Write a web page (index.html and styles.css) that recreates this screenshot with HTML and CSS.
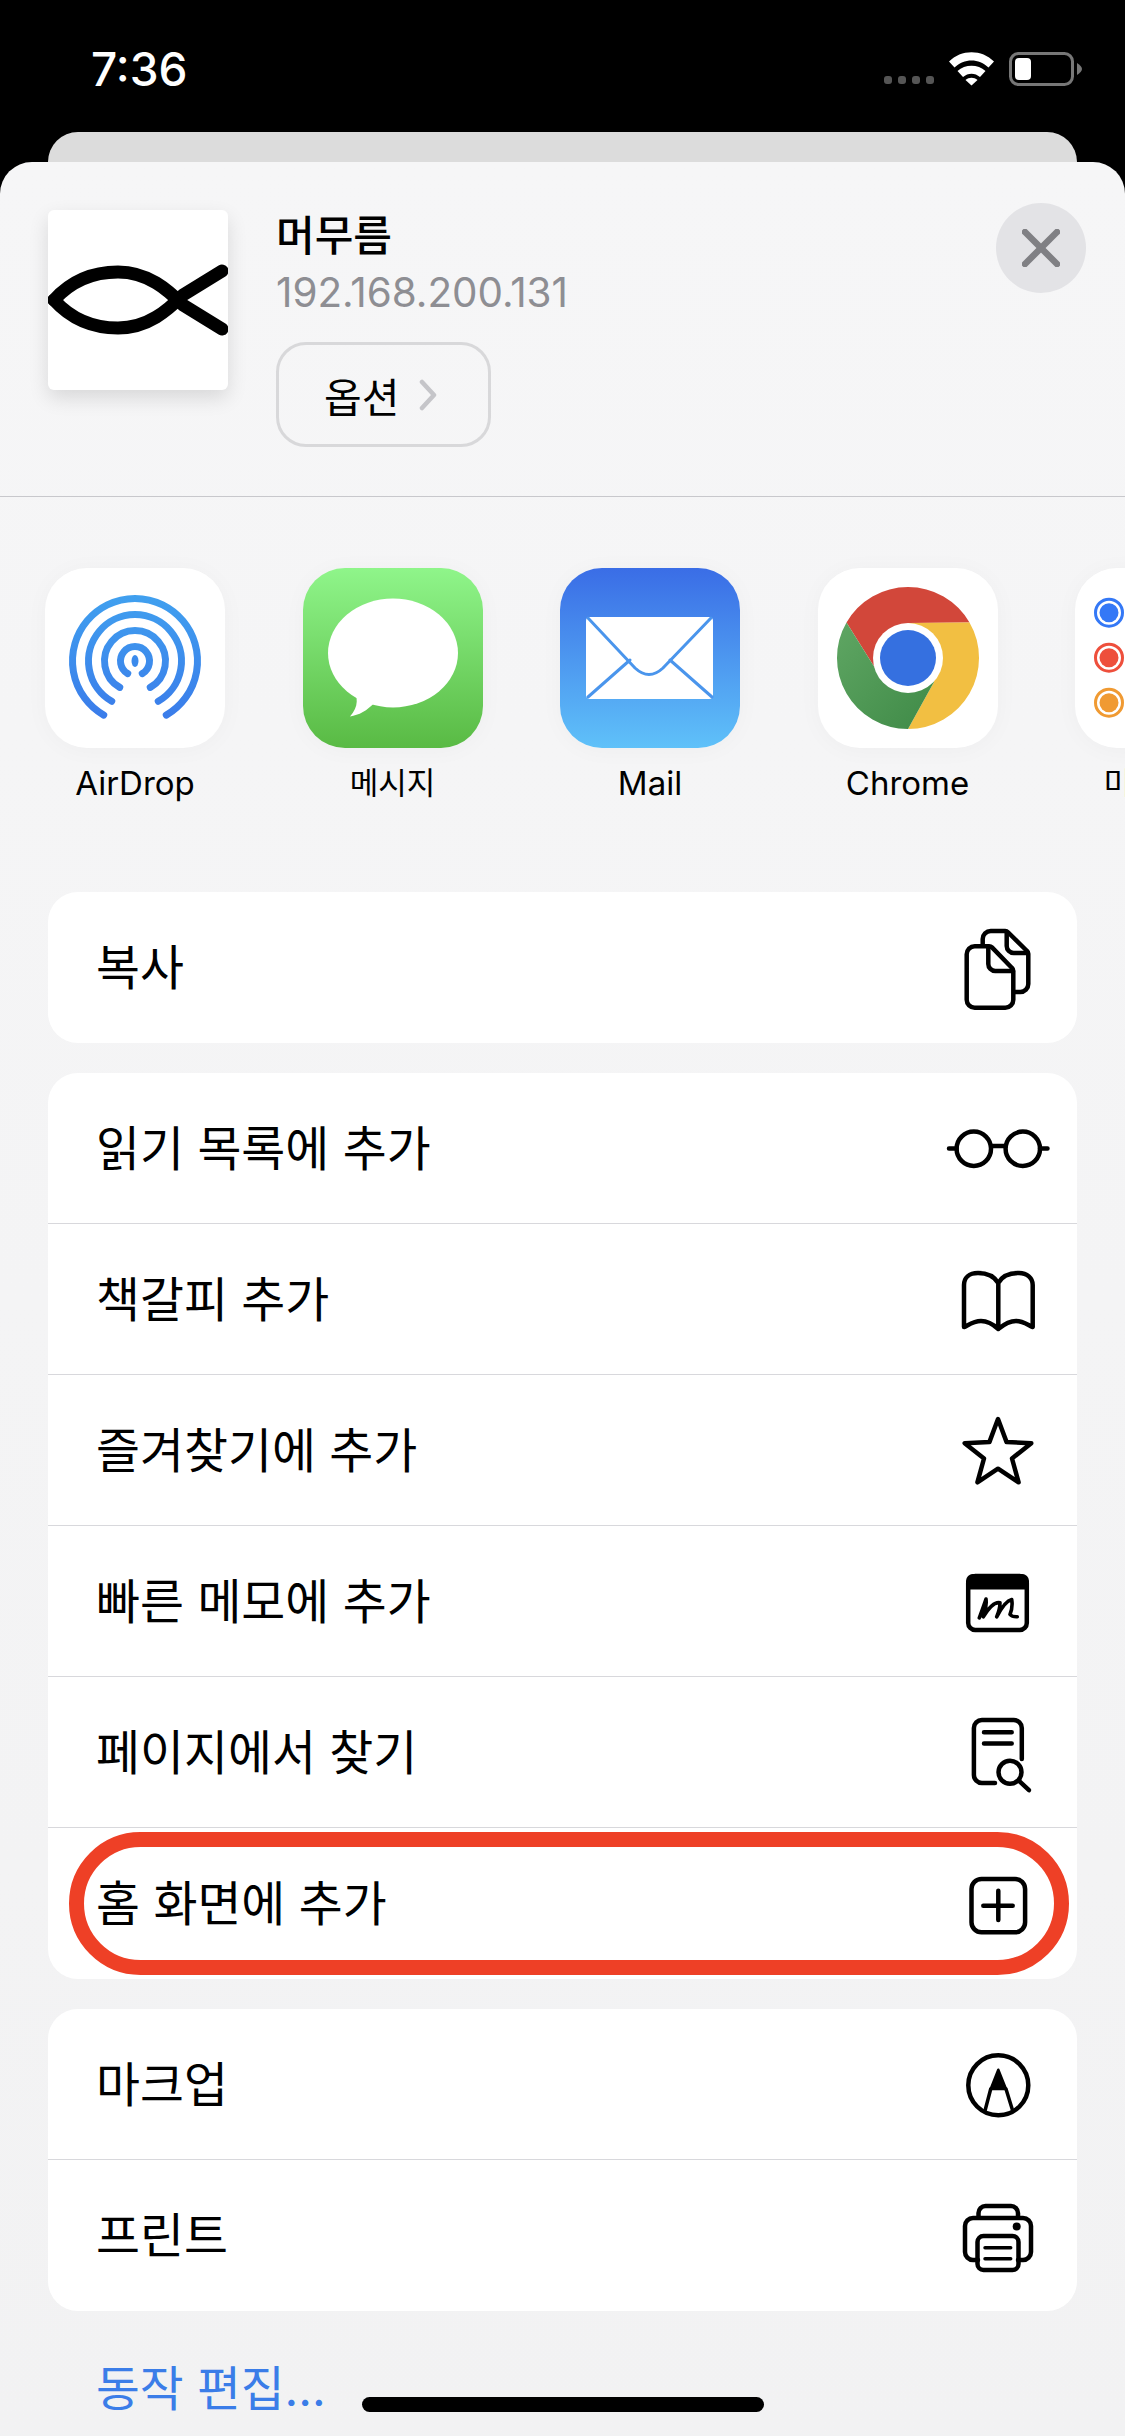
FILE: index.html
```html
<!DOCTYPE html>
<html lang="ko">
<head>
  <meta charset="UTF-8" />
  <title>공유</title>
  <link rel="stylesheet" href="styles.css">
</head>
<body>

<div class="statusBar">
  <span class="time">7:36</span>
  <div class="statusIcons">
    <div class="signal"><i></i><i></i><i></i><i></i></div>
    <svg width="45" height="34" viewBox="0 0 45 34" fill="#fff">
      <path d="M0 9.5C12-3 33-3 45 9.5L39.5 15.5C30 6 15 6 5.5 15.5Z"/>
      <path d="M8.5 19C16 12 29 12 36.5 19L31 25C26 20.5 19 20.5 14 25Z"/>
      <path d="M16.5 28C20 25 25 25 28.5 28L22.5 33.5Z"/>
    </svg>
    <svg width="73" height="34" viewBox="0 0 73 34">
      <rect x="1.5" y="1.5" width="62" height="31" rx="8" fill="none" stroke="#777" stroke-width="3"/>
      <rect x="6" y="6" width="16" height="22" rx="4" fill="#fff"/>
      <path d="M68 11C71 13 73 15 73 17C73 19 71 21 68 23Z" fill="#777"/>
    </svg>
  </div>
</div>

<div class="backCard"></div>

<div class="sheet">
  <header class="sheetHeader">
    <div class="thumb">
      <svg width="180" height="180" viewBox="0 0 180 180" fill="none" stroke="#000" stroke-width="13" stroke-linecap="round" stroke-linejoin="round">
        <path d="M6 90C24 70 45 62 70 62C100 62 120 80 135 95L174 119"/>
        <path d="M6 90C24 110 45 118 70 118C100 118 120 100 135 85L174 61"/>
      </svg>
    </div>
    <div class="pageInfo">
      <div class="pageTitle">머무름</div>
      <div class="pageUrl">192.168.200.131</div>
      <div class="optionBtn">
        <span>옵션</span>
        <svg width="18" height="32" viewBox="0 0 18 32" fill="none" stroke="#c5c5c9" stroke-width="4.5" stroke-linecap="round" stroke-linejoin="round"><path d="M3 3L15 16L3 29"/></svg>
      </div>
    </div>
    <div class="closeBtn">
      <svg width="38" height="38" viewBox="0 0 38 38" stroke="#808084" stroke-width="6.5" stroke-linecap="round"><path d="M3 3L35 35M35 3L3 35"/></svg>
    </div>
  </header>

  <div class="apps">
    <div class="app">
      <div class="appIcon">
        <svg width="180" height="180" viewBox="0 0 180 180" fill="none" stroke="url(#dropBlue)" stroke-width="7" stroke-linecap="round">
          <defs><linearGradient id="dropBlue" gradientUnits="userSpaceOnUse" x1="0" y1="27" x2="0" y2="150"><stop offset="0" stop-color="#40a0ef"/><stop offset="1" stop-color="#3a7cea"/></linearGradient></defs>
          <path d="M58.75 147.1A62.5 62.5 0 1 1 121.25 147.1"/>
          <path d="M66.75 133.3A46.5 46.5 0 1 1 113.25 133.3"/>
          <path d="M74.75 119.4A30.5 30.5 0 1 1 105.25 119.4"/>
          <path d="M82.75 105.6A14.5 14.5 0 1 1 97.25 105.6"/>
          <ellipse cx="90" cy="93" rx="3.5" ry="6" fill="#3a8aec" stroke="none"/>
        </svg>
      </div>
      <div class="appName latin">AirDrop</div>
    </div>
    <div class="app">
      <div class="appIcon messages">
        <svg width="180" height="180" viewBox="0 0 180 180" fill="#fff">
          <ellipse cx="90" cy="85" rx="65" ry="54.5"/>
          <path d="M50 118C55 130 56 138 47 148.5C56 147 64 143 72 134Z"/>
        </svg>
      </div>
      <div class="appName">메시지</div>
    </div>
    <div class="app">
      <div class="appIcon mail">
        <svg width="180" height="180" viewBox="0 0 180 180" fill="none" stroke="#4a95ec" stroke-width="3" stroke-linecap="round">
          <rect x="26" y="49" width="127" height="82" rx="4" fill="#fff" stroke="none"/>
          <path d="M28 50L75 100Q89 113 103 100L151 50"/>
          <path d="M28 129L70 92M110 92L152 129"/>
        </svg>
      </div>
      <div class="appName latin">Mail</div>
    </div>
    <div class="app">
      <div class="appIcon">
        <svg width="180" height="180" viewBox="0 0 180 180">
          <defs><linearGradient id="chromeGreen" x1="0" y1="0" x2="1" y2="1"><stop offset="0" stop-color="#5fa663"/><stop offset="1" stop-color="#3f8a47"/></linearGradient></defs>
          <path d="M90 55L151.5 54.5A71 71 0 0 0 28.5 54.5L57 100L90 90Z" fill="#d2473a"/>
          <path d="M90 55L151.5 54.5A71 71 0 0 1 90 161L116 114L90 90Z" fill="#f2bf42"/>
          <path d="M28.5 54.5A71 71 0 0 0 90 161L116 114L90 90L57 100Z" fill="url(#chromeGreen)"/>
          <circle cx="90" cy="90" r="35" fill="#fff"/>
          <circle cx="90" cy="90" r="28" fill="#3570e0"/>
        </svg>
      </div>
      <div class="appName latin">Chrome</div>
    </div>
    <div class="app">
      <div class="appIcon">
        <svg width="180" height="180" viewBox="0 0 180 180" stroke-width="3">
          <circle cx="34" cy="44.7" r="13.5" fill="#fff" stroke="#3478f6"/><circle cx="34" cy="44.7" r="9.5" fill="#3478f6"/>
          <circle cx="34" cy="89.7" r="13.5" fill="#fff" stroke="#ee4f3c"/><circle cx="34" cy="89.7" r="9.5" fill="#ee4f3c"/>
          <circle cx="34" cy="134.7" r="13.5" fill="#fff" stroke="#f09a32"/><circle cx="34" cy="134.7" r="9.5" fill="#f09a32"/>
        </svg>
      </div>
      <div class="appName">미리 알림</div>
    </div>
  </div>

  <div class="group">
    <div class="row">
      <span>복사</span>
      <svg class="rowIcon" viewBox="0 0 110 100">
        <path d="M39.7 27V21a8 8 0 0 1 8-8H62a4 4 0 0 1 3 1.2L84 33a4 4 0 0 1 1.3 3V66a8 8 0 0 1-8 8H71"/>
        <path d="M63.7 14V28a7 7 0 0 0 7 7H85"/>
        <path d="M31.7 28.2H46a4 4 0 0 1 3 1.2L69 50a4 4 0 0 1 1.3 3V81.8a8 8 0 0 1-8 8H31.7a8 8 0 0 1-8-8V36.2a8 8 0 0 1 8-8Z" fill="#fff"/>
        <path d="M45.3 29V46a7 7 0 0 0 7 7H70"/>
      </svg>
    </div>
  </div>

  <div class="group">
    <div class="row">
      <span>읽기 목록에 추가</span>
      <svg class="rowIcon" viewBox="0 0 110 100">
        <circle cx="30.8" cy="50.8" r="17.2"/>
        <circle cx="79.8" cy="50.8" r="17.2"/>
        <path d="M48 48H62.6M6 50.5H13.6M97 50.5H104.5"/>
      </svg>
    </div>
    <div class="row">
      <span>책갈피 추가</span>
      <svg class="rowIcon" viewBox="0 0 110 100">
        <path d="M55.3 34C51 27 43 24 35 24C26 24 21 29 21 36V78C24 77 30 72 38 72C46 72 52 77 55.3 80C59 77 65 72 73 72C81 72 86 77 89.7 78V36C89.7 29 84 24 76 24C67 24 59 27 55.3 34V80"/>
      </svg>
    </div>
    <div class="row">
      <span>즐겨찾기에 추가</span>
      <svg class="rowIcon" viewBox="0 0 110 100">
        <path d="M55 19L63.6 42.1L88.3 43.2L69 58.5L75.6 82.3L55 68.7L34.4 82.3L41 58.5L21.7 43.2L46.4 42.1Z"/>
      </svg>
    </div>
    <div class="row">
      <span>빠른 메모에 추가</span>
      <svg class="rowIcon" viewBox="0 0 110 100">
        <rect x="25.2" y="25" width="58.6" height="54" rx="7"/>
        <path d="M23 38.5V30a7 7 0 0 1 7-7H79a7 7 0 0 1 7 7V38.5Z" fill="#000" stroke="none"/>
        <path d="M36.3 66.8Q41 54 43 48Q44 56 40.3 65.8Q50 50 57 51.8Q57 58 53.7 65.8Q62 50 68.7 48.5Q70 56 67 63.5Q69 66 74.3 65.8" stroke-width="3.6"/>
      </svg>
    </div>
    <div class="row">
      <span>페이지에서 찾기</span>
      <svg class="rowIcon" viewBox="0 0 110 100">
        <path d="M78.8 57V26a8 8 0 0 0-8-8H38.9a8 8 0 0 0-8 8V73a8 8 0 0 0 8 8H52"/>
        <path d="M41 30.2H68.7M41 41.5H68.7"/>
        <circle cx="67" cy="70.2" r="11.5"/>
        <path d="M76.3 79.2L86 88.2"/>
      </svg>
    </div>
    <div class="row">
      <span>홈 화면에 추가</span>
      <svg class="rowIcon" viewBox="0 0 110 100">
        <rect x="28.5" y="25" width="53.6" height="53.3" rx="10"/>
        <path d="M40.3 51.7H69.7M55.3 36.7V66"/>
      </svg>
      <div class="redMark"></div>
    </div>
  </div>

  <div class="group">
    <div class="row">
      <span>마크업</span>
      <svg class="rowIcon" viewBox="0 0 110 100">
        <circle cx="55.3" cy="51.3" r="30"/>
        <path d="M55.3 35.7L63 55H47.7Z" fill="#000" stroke-width="2.5"/>
        <path d="M47.7 55L42 76.7M63 55L69.7 76.7" stroke-width="3.5"/>
      </svg>
    </div>
    <div class="row">
      <span>프린트</span>
      <svg class="rowIcon" viewBox="0 0 110 100">
        <path d="M35.5 30V27a7 7 0 0 1 7-7H68a7 7 0 0 1 7 7V30"/>
        <path d="M35 74H30a8 8 0 0 1-8-8V40a8 8 0 0 1 8-8H80a8 8 0 0 1 8 8V66a8 8 0 0 1-8 8H75"/>
        <rect x="34.5" y="50" width="41" height="34" rx="6"/>
        <path d="M42 61.8H67.7M42 72.8H67.7" stroke-width="3.5"/>
        <circle cx="73.7" cy="40.5" r="4" fill="#000" stroke="none"/>
      </svg>
    </div>
  </div>

  <div class="editActions">동작 편집...</div>
</div>

<div class="homeBar"></div>

</body>
</html>
```

FILE: styles.css
```css
body {
  margin: 0;
  width: 1125px;
  height: 2436px;
  overflow: hidden;
  position: relative;
  background-color: #000;
  font-family: Inter, "Noto Sans CJK KR", sans-serif;
  color: #000;
}

/* status bar */
.statusBar {
  height: 132px;
  box-sizing: border-box;
  padding: 6px 43px 0 91px;
  display: flex;
  align-items: center;
  justify-content: space-between;
  color: #fff;
}
.time {
  font-size: 46px;
  font-weight: 500;
}
.statusIcons {
  display: flex;
  align-items: flex-end;
}
.statusIcons svg {
  display: block;
  margin-left: 15px;
}
.signal {
  display: flex;
  gap: 6px;
  margin-bottom: 2px;
}
.signal i {
  width: 8px;
  height: 8px;
  border-radius: 3px;
  background-color: #555;
}

/* sheet */
.backCard {
  height: 30px;
  margin: 0 48px;
  background-color: #dcdcdc;
  border-radius: 30px 30px 0 0;
}
.sheet {
  height: 2274px;
  background: linear-gradient(#f6f6f7, #f2f2f3);
  border-radius: 32px 32px 0 0;
}
.sheetHeader {
  height: 335px;
  box-sizing: border-box;
  padding: 48px 39px 0 48px;
  display: flex;
  align-items: flex-start;
  border-bottom: 1.5px solid #c8c8cc;
}
.thumb {
  width: 180px;
  height: 180px;
  flex: none;
  background-color: #fff;
  border-radius: 6px;
  box-shadow: 0 8px 20px rgba(0, 0, 0, 0.12);
}
.thumb svg {
  display: block;
}
.pageInfo {
  flex: 1;
  margin-left: 48px;
}
.pageTitle {
  font-size: 42px;
  font-weight: 500;
  line-height: 46px;
  padding-top: 3px;
}
.pageUrl {
  margin-top: 11px;
  font-size: 40.4px;
  line-height: 46px;
  color: #8e8e93;
}
.optionBtn {
  width: 215px;
  height: 105px;
  margin-top: 26px;
  box-sizing: border-box;
  display: flex;
  align-items: center;
  padding-left: 45px;
  gap: 20px;
  border: 3px solid #d8d8da;
  border-radius: 30px;
  font-size: 41px;
}
.closeBtn {
  width: 90px;
  height: 90px;
  margin-top: -7px;
  flex: none;
  display: flex;
  align-items: center;
  justify-content: center;
  border-radius: 50%;
  background-color: #e3e3e6;
}

/* app row */
.apps {
  display: flex;
  gap: 77.5px;
  padding: 71px 0 0 45px;
  height: 395px;
  box-sizing: border-box;
  overflow: hidden;
}
.app {
  width: 180px;
  flex: none;
}
.appIcon {
  width: 180px;
  height: 180px;
  background-color: #fff;
  border-radius: 42px;
  box-shadow: 0 2px 24px rgba(0, 0, 0, 0.03);
}
.appIcon svg {
  display: block;
}
.messages {
  background: linear-gradient(#8ff58a, #59ba44);
}
.mail {
  background: linear-gradient(#3a6de6, #5fc1f9);
}
.appName {
  margin-top: 15px;
  font-size: 31px;
  line-height: 40px;
  text-align: center;
  white-space: nowrap;
}
.latin {
  font-size: 33px;
}

/* action groups */
.group {
  margin: 0 48px 30px;
  background-color: #fff;
  border-radius: 30px;
}
.row {
  height: 151px;
  box-sizing: border-box;
  padding: 0 24px 0 48px;
  display: flex;
  align-items: center;
  justify-content: space-between;
  position: relative;
  font-size: 47.8px;
  border-bottom: 1.5px solid #d8d8dc;
}
.row:last-child {
  border-bottom: none;
}
.row span {
  padding-bottom: 6px;
}
.rowIcon {
  width: 110px;
  height: 100px;
  flex: none;
  fill: none;
  stroke: #000;
  stroke-width: 4.5;
  stroke-linecap: round;
  stroke-linejoin: round;
}
.redMark {
  position: absolute;
  left: 21px;
  right: 8px;
  top: 4px;
  bottom: 4px;
  border: 15px solid #ee4026;
  border-radius: 72px;
}
.editActions {
  padding-left: 96px;
  margin-top: 45px;
  font-size: 47.6px;
  line-height: 66px;
  color: #3b7de8;
}
.homeBar {
  position: absolute;
  left: 362px;
  top: 2397px;
  width: 402px;
  height: 15px;
  border-radius: 8px;
  background-color: #000;
}
```
